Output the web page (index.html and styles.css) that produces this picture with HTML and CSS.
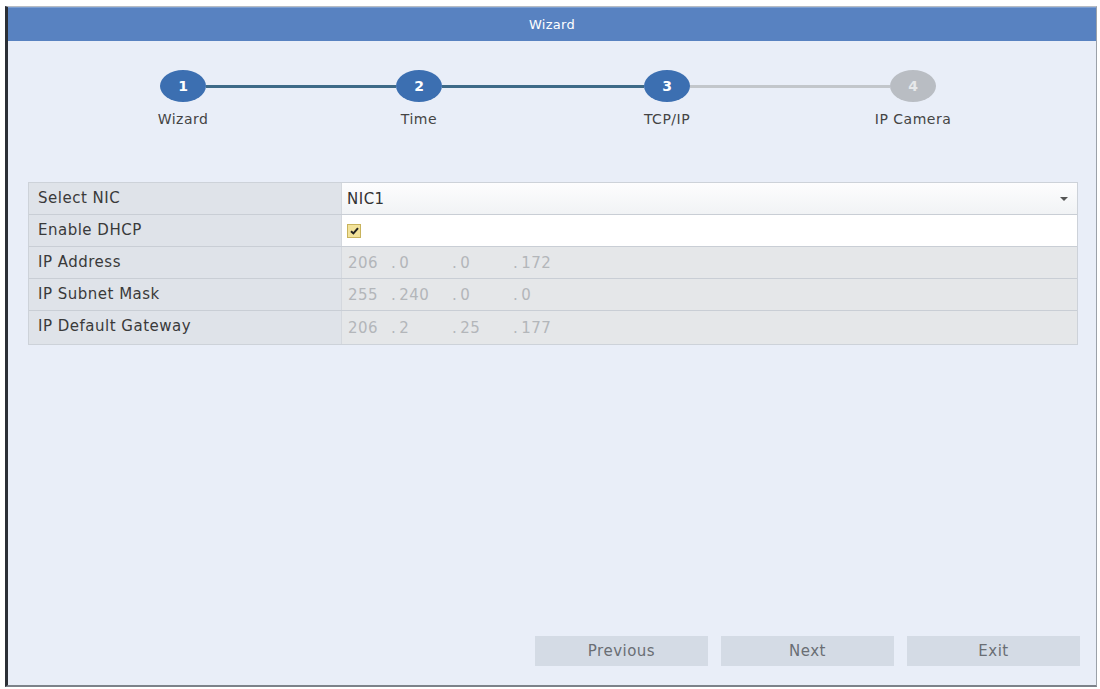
FILE: index.html
```html
<!DOCTYPE html>
<html lang="en">

<head>
    <meta charset="UTF-8">
    <meta name="viewport" content="width=device-width, initial-scale=1.0">
    <title>Wizard</title>
    <link rel="stylesheet" href="styles.css">
</head>

<body>

    <div class="window">
        <!-- Title bar -->
        <div class="titlebar">Wizard</div>

        <div class="content">
            <!-- Steps -->
            <div class="stepper">
                <div class="step done">
                    <div class="dot-num">1</div>
                    <div class="step-label">Wizard</div>
                </div>
                <div class="line done line-a"></div>
                <div class="step done">
                    <div class="dot-num">2</div>
                    <div class="step-label">Time</div>
                </div>
                <div class="line done line-b"></div>
                <div class="step done">
                    <div class="dot-num">3</div>
                    <div class="step-label">TCP/IP</div>
                </div>
                <div class="line line-c"></div>
                <div class="step">
                    <div class="dot-num">4</div>
                    <div class="step-label">IP Camera</div>
                </div>
            </div>

            <!-- Settings table -->
            <div class="form-table">
                <div class="row">
                    <div class="label">Select NIC</div>
                    <div class="value select">
                        <span>NIC1</span>
                        <span class="caret"></span>
                    </div>
                </div>
                <div class="row">
                    <div class="label">Enable DHCP</div>
                    <div class="value white">
                        <span class="checkbox">
                            <svg width="9" height="8" viewBox="0 0 9 8">
                                <path d="M1 4.2 L3.4 6.4 L8 1.2" fill="none" stroke="#222" stroke-width="2" />
                            </svg>
                        </span>
                    </div>
                </div>
                <div class="row">
                    <div class="label">IP Address</div>
                    <div class="value disabled">
                        <span class="octet">206</span>
                        <span class="octet"><span class="sep">.</span>0</span>
                        <span class="octet"><span class="sep">.</span>0</span>
                        <span class="octet"><span class="sep">.</span>172</span>
                    </div>
                </div>
                <div class="row">
                    <div class="label">IP Subnet Mask</div>
                    <div class="value disabled">
                        <span class="octet">255</span>
                        <span class="octet"><span class="sep">.</span>240</span>
                        <span class="octet"><span class="sep">.</span>0</span>
                        <span class="octet"><span class="sep">.</span>0</span>
                    </div>
                </div>
                <div class="row last">
                    <div class="label">IP Default Gateway</div>
                    <div class="value disabled">
                        <span class="octet">206</span>
                        <span class="octet"><span class="sep">.</span>2</span>
                        <span class="octet"><span class="sep">.</span>25</span>
                        <span class="octet"><span class="sep">.</span>177</span>
                    </div>
                </div>
            </div>

            <!-- Footer buttons -->
            <div class="buttons">
                <button>Previous</button>
                <button>Next</button>
                <button>Exit</button>
            </div>
        </div>
    </div>

</body>

</html>
```

FILE: styles.css
```css
body {
    margin: 0;
    padding: 0;
    background-color: #fff;
    font-family: "DejaVu Sans", Verdana, sans-serif;
    color: #333;
}

.window {
    margin: 6px 0 0 5px;
    width: 1092px;
    height: 681px;
    box-sizing: border-box;
    display: flex;
    flex-direction: column;
    border-top: 1px solid #b7bcc4;
    border-left: 3px solid #2b2f36;
    border-right: 1px solid #9ba1a9;
    border-bottom: 2px solid #7c828a;
    background-color: #e9eef8;
}

.titlebar {
    height: 34px;
    line-height: 34px;
    background-color: #5882c1;
    border-top: 1px solid #7b9fd2;
    box-sizing: border-box;
    color: #fff;
    text-align: center;
    font-size: 13px;
    letter-spacing: 0.3px;
}

.content {
    flex: 1;
    display: flex;
    flex-direction: column;
    padding: 29px 16px 19px 20px;
}

/* Steps */
.stepper {
    display: flex;
    margin-left: 132px;
    width: 776px;
}

.step {
    width: 46px;
    display: flex;
    flex-direction: column;
    align-items: center;
}

.dot-num {
    width: 46px;
    height: 32px;
    border-radius: 50%;
    background-color: #b9bdc3;
    color: #e6e8ea;
    font-weight: bold;
    font-size: 14px;
    line-height: 32px;
    text-align: center;
}

.step.done .dot-num {
    background-color: #3c6fb1;
    color: #fff;
}

.step-label {
    margin-top: 9px;
    white-space: nowrap;
    font-size: 14px;
    line-height: 17px;
    letter-spacing: 0.5px;
    color: #444;
}

.line {
    height: 3px;
    margin-top: 15px;
    background-color: #c2c6cb;
}

.line.done {
    background-color: #3e6a88;
}

.line-a {
    width: 190px;
}

.line-b {
    width: 202px;
}

.line-c {
    width: 200px;
}

/* Settings table */
.form-table {
    margin: 54px 2px 0 0;
    border: 1px solid #cdd2d9;
}

.row {
    display: flex;
    height: 31px;
    border-bottom: 1px solid #c9ced5;
}

.row.last {
    height: 33px;
    border-bottom: none;
}

.label {
    width: 303px;
    padding-left: 9px;
    background-color: #dfe3e9;
    border-right: 1px solid #d4d8de;
    font-size: 15px;
    letter-spacing: 0.5px;
    line-height: 31px;
    color: #3a3a3a;
}

.value {
    flex: 1;
    display: flex;
    align-items: center;
    padding-left: 5px;
    font-size: 15px;
    letter-spacing: 0.5px;
}

.value.select {
    justify-content: space-between;
    padding-right: 9px;
    background: linear-gradient(#fdfdfe, #f1f3f5);
    color: #333;
}

.caret {
    width: 0;
    height: 0;
    border-left: 4px solid transparent;
    border-right: 4px solid transparent;
    border-top: 4px solid #555;
}

.value.white {
    background-color: #fff;
}

.checkbox {
    width: 12px;
    height: 12px;
    display: flex;
    align-items: center;
    justify-content: center;
    background-color: #f2e29a;
    border: 1px solid #c8b35c;
}

.value.disabled {
    background-color: #e5e7e9;
    color: #b3b6ba;
}

.octet {
    width: 61px;
}

.octet:first-child {
    width: 43px;
    padding-left: 1px;
}

.sep {
    margin-right: 3px;
}

/* Footer buttons */
.buttons {
    margin-top: auto;
    display: flex;
    justify-content: flex-end;
    gap: 13px;
}

.buttons button {
    width: 173px;
    height: 30px;
    border: none;
    background-color: #d4dbe5;
    color: #6a6e74;
    font-family: "DejaVu Sans", Verdana, sans-serif;
    font-size: 15px;
    letter-spacing: 0.5px;
    cursor: pointer;
}
```
